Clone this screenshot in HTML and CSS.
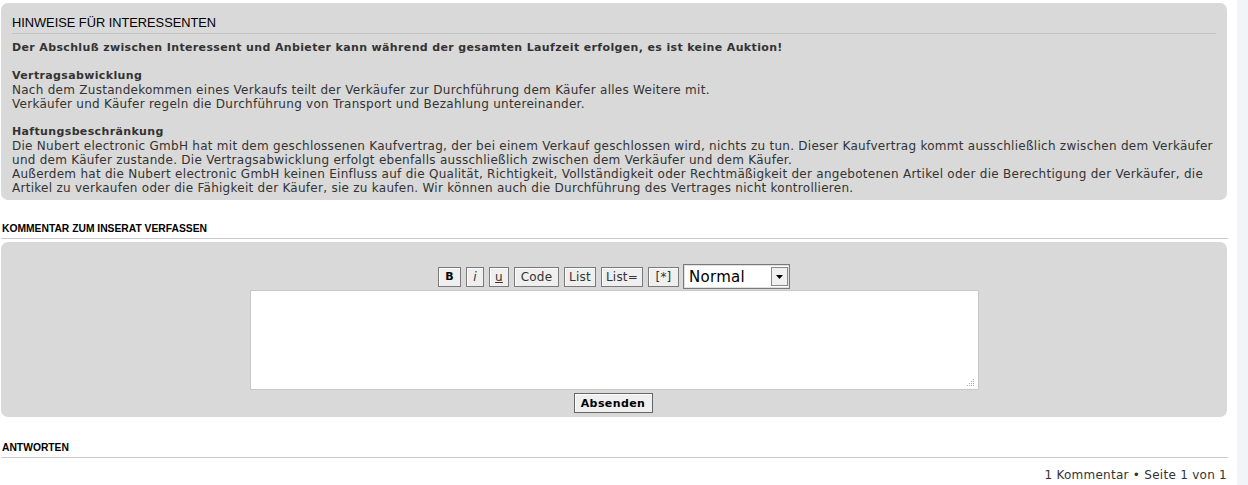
FILE: index.html
```html
<!DOCTYPE html>
<html lang="de">
<head>
<meta charset="utf-8">
<title>Hinweise</title>
<link rel="stylesheet" href="styles.css">
</head>
<body>
<div class="page">
  <main class="main">
    <section class="panel info">
      <h3 class="info-title">HINWEISE FÜR INTERESSENTEN</h3>
      <p class="lead">Der Abschluß zwischen Interessent und Anbieter kann während der gesamten Laufzeit erfolgen, es ist keine Auktion!</p>
      <p><strong>Vertragsabwicklung</strong>Nach dem Zustandekommen eines Verkaufs teilt der Verkäufer zur Durchführung dem Käufer alles Weitere mit.<br>Verkäufer und Käufer regeln die Durchführung von Transport und Bezahlung untereinander.</p>
      <p><strong>Haftungsbeschränkung</strong>Die Nubert electronic GmbH hat mit dem geschlossenen Kaufvertrag, der bei einem Verkauf geschlossen wird, nichts zu tun. Dieser Kaufvertrag kommt ausschließlich zwischen dem Verkäufer und dem Käufer zustande. Die Vertragsabwicklung erfolgt ebenfalls ausschließlich zwischen dem Verkäufer und dem Käufer.<br>Außerdem hat die Nubert electronic GmbH keinen Einfluss auf die Qualität, Richtigkeit, Vollständigkeit oder Rechtmäßigkeit der angebotenen Artikel oder die Berechtigung der Verkäufer, die Artikel zu verkaufen oder die Fähigkeit der Käufer, sie zu kaufen. Wir können auch die Durchführung des Vertrages nicht kontrollieren.</p>
    </section>

    <h2 class="section-title">KOMMENTAR ZUM INSERAT VERFASSEN</h2>

    <section class="panel compose">
      <div class="toolbar">
        <button class="tb b">B</button>
        <button class="tb i">i</button>
        <button class="tb u">u</button>
        <button class="tb w-code">Code</button>
        <button class="tb w-list">List</button>
        <button class="tb w-listeq">List=</button>
        <button class="tb w-star">[*]</button>
        <div class="select"><span class="select-val">Normal</span><span class="select-arrow"><svg width="7" height="4" viewBox="0 0 7 4"><path d="M0 0h7L3.5 4z" fill="#000"/></svg></span></div>
      </div>
      <div class="textarea"><span class="grip"><svg width="8" height="8" viewBox="0 0 8 8"><g fill="#aaa"><rect x="6" y="0" width="1" height="1"/><rect x="4" y="2" width="1" height="1"/><rect x="6" y="2" width="1" height="1"/><rect x="2" y="4" width="1" height="1"/><rect x="4" y="4" width="1" height="1"/><rect x="6" y="4" width="1" height="1"/><rect x="0" y="6" width="1" height="1"/><rect x="2" y="6" width="1" height="1"/><rect x="4" y="6" width="1" height="1"/><rect x="6" y="6" width="1" height="1"/></g></svg></span></div>
      <button class="submit">Absenden</button>
    </section>

    <h2 class="section-title answers">ANTWORTEN</h2>
    <div class="pagination">1 Kommentar • Seite 1 von 1</div>
  </main>
  <aside class="strip"></aside>
</div>
</body>
</html>
```

FILE: styles.css
```css
html, body {
  margin: 0;
  padding: 0;
  background: #fff;
}
body {
  font-family: "DejaVu Sans", Verdana, sans-serif;
  font-size: 12px;
  letter-spacing: 0.27px;
  color: #333;
}
.page {
  display: flex;
  gap: 9px;
  min-height: 485px;
}
.main {
  width: 1228px;
  flex: none;
  padding-top: 3px;
}
.strip {
  flex: 1;
  background: #f3f4f8;
}
.panel {
  background: #d9d9d9;
  border-radius: 7px;
  margin-left: 1px;
  width: 1226px;
}
.info {
  padding: 10px 11px 5px 11px;
  box-sizing: border-box;
  line-height: 14px;
}
.info-title {
  margin: 0 0 7px 0;
  font-family: "Liberation Sans", Arial, sans-serif;
  font-weight: normal;
  font-size: 12.8px;
  letter-spacing: 0;
  color: #000;
  line-height: 19px;
  padding-bottom: 1px;
  border-bottom: 1px solid #c4c4c4;
}
.info p {
  margin: 0 0 14px 0;
}
.info p:last-child {
  margin-bottom: 0;
}
.lead,
.info strong {
  font-weight: bold;
  font-size: 11px;
  letter-spacing: 0.36px;
}
.info strong {
  display: block;
}
.section-title {
  font-family: "Liberation Sans", Arial, sans-serif;
  font-weight: bold;
  font-size: 10.3px;
  letter-spacing: 0;
  color: #000;
  margin: 23px 0 3px 1px;
  padding: 0 0 3px 1px;
  line-height: 12px;
  border-bottom: 1px solid #ccc;
}
.compose {
  height: 175px;
  display: flex;
  flex-direction: column;
  align-items: center;
  padding-top: 22px;
  box-sizing: border-box;
}
.toolbar {
  display: flex;
  align-items: center;
  gap: 5px;
}
.tb {
  font-family: "DejaVu Sans", Verdana, sans-serif;
  font-size: 12px;
  letter-spacing: 0.2px;
  height: 20px;
  padding: 0;
  border: 1px solid #7a7a7a;
  background: #efefef;
  color: #333;
  box-shadow: inset 1px 1px 0 #fff;
}
.tb.b {
  font-weight: bold;
  font-size: 11px;
  color: #000;
  width: 23px;
}
.tb.i {
  font-style: italic;
  width: 18px;
}
.tb.u {
  text-decoration: underline;
  width: 20px;
}
.w-code { width: 45px; }
.w-list { width: 32px; }
.w-listeq { width: 42px; }
.w-star { width: 31px; }
.select {
  width: 107px;
  height: 25px;
  box-sizing: border-box;
  border: 1px solid #7a7a7a;
  background: #fff;
  display: flex;
  align-items: center;
  justify-content: space-between;
  padding: 0 1px 0 5px;
  margin-left: -1px;
  box-shadow: inset 0 0 0 1px #e0e0e0;
}
.select-val {
  font-family: "DejaVu Sans", Verdana, sans-serif;
  font-size: 15px;
  letter-spacing: 0.3px;
  color: #000;
}
.select-arrow {
  width: 17px;
  height: 19px;
  box-sizing: border-box;
  border: 1px solid #888;
  background: #f0f0f0;
  display: flex;
  align-items: center;
  justify-content: center;
}
.textarea {
  width: 729px;
  height: 100px;
  box-sizing: border-box;
  background: #fff;
  border: 1px solid #c8c8c8;
  margin-top: 1px;
  position: relative;
}
.grip {
  position: absolute;
  right: 3px;
  bottom: 2px;
  line-height: 0;
}
.submit {
  margin-top: 3px;
  margin-left: -2px;
  font-family: "DejaVu Sans", Verdana, sans-serif;
  font-weight: bold;
  font-size: 11px;
  letter-spacing: 0.4px;
  color: #000;
  height: 20px;
  width: 79px;
  padding: 0;
  border: 1px solid #666;
  background: #efefef;
  box-shadow: inset 1px 1px 0 #fff;
}
.answers {
  margin-top: 25px;
}
.pagination {
  text-align: right;
  padding-top: 7px;
  padding-right: 1px;
  line-height: 14px;
}
```
